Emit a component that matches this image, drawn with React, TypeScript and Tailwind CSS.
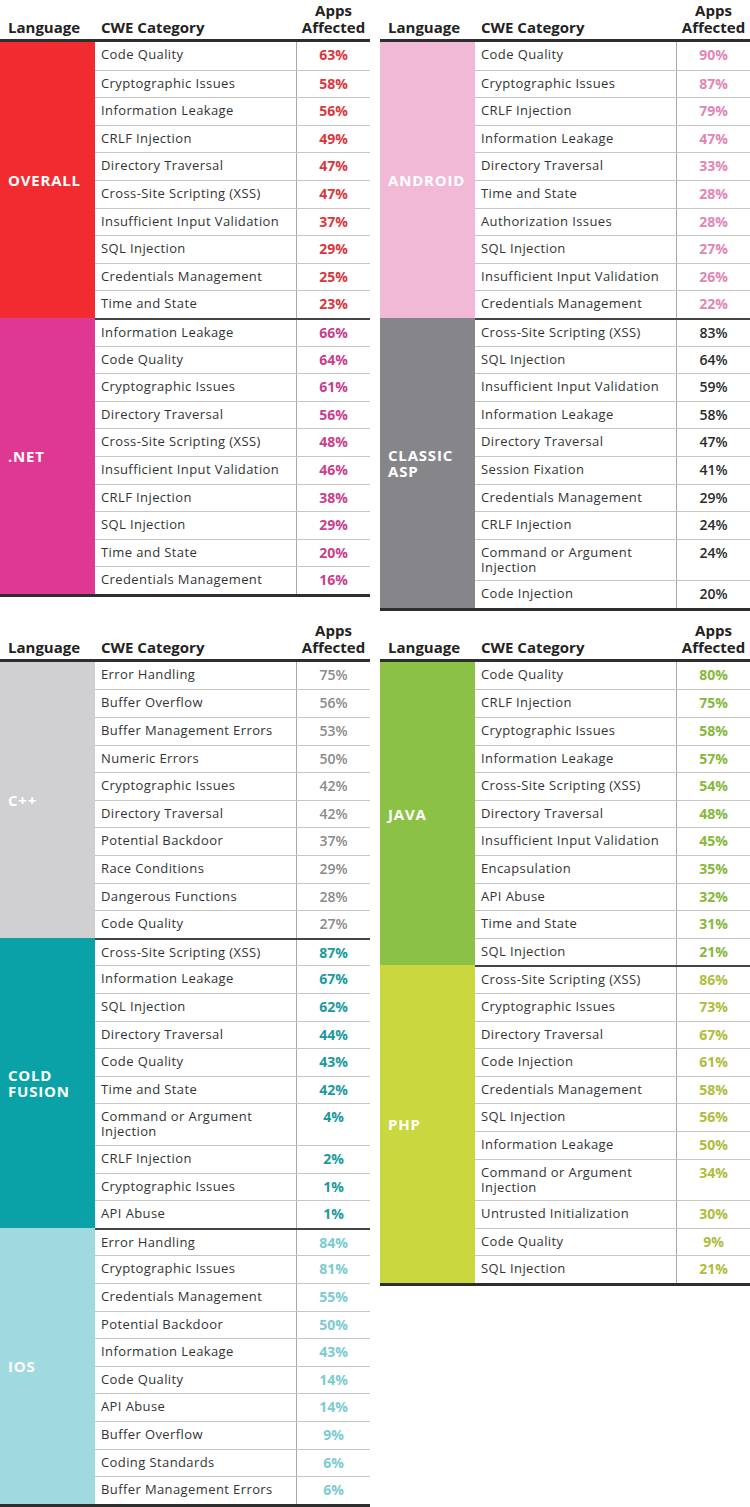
import React from "react";

type Row = { name: string; pct: string; tall?: boolean };
type Group = { label: string[]; bg: string; pct: string; weight: string; rows: Row[] };

const r = (name: string, pct: string, tall?: boolean): Row => ({ name, pct, tall });

const topLeft: Group[] = [
  {
    label: ["OVERALL"],
    bg: "bg-[#f22b30]",
    pct: "text-[#d8383d]",
    weight: "font-bold",
    rows: [
      r("Code Quality", "63%"),
      r("Cryptographic Issues", "58%"),
      r("Information Leakage", "56%"),
      r("CRLF Injection", "49%"),
      r("Directory Traversal", "47%"),
      r("Cross-Site Scripting (XSS)", "47%"),
      r("Insufficient Input Validation", "37%"),
      r("SQL Injection", "29%"),
      r("Credentials Management", "25%"),
      r("Time and State", "23%"),
    ],
  },
  {
    label: [".NET"],
    bg: "bg-[#df3893]",
    pct: "text-[#c7408f]",
    weight: "font-bold",
    rows: [
      r("Information Leakage", "66%"),
      r("Code Quality", "64%"),
      r("Cryptographic Issues", "61%"),
      r("Directory Traversal", "56%"),
      r("Cross-Site Scripting (XSS)", "48%"),
      r("Insufficient Input Validation", "46%"),
      r("CRLF Injection", "38%"),
      r("SQL Injection", "29%"),
      r("Time and State", "20%"),
      r("Credentials Management", "16%"),
    ],
  },
];

const topRight: Group[] = [
  {
    label: ["ANDROID"],
    bg: "bg-[#f1b9d5]",
    pct: "text-[#df86b6]",
    weight: "font-bold",
    rows: [
      r("Code Quality", "90%"),
      r("Cryptographic Issues", "87%"),
      r("CRLF Injection", "79%"),
      r("Information Leakage", "47%"),
      r("Directory Traversal", "33%"),
      r("Time and State", "28%"),
      r("Authorization Issues", "28%"),
      r("SQL Injection", "27%"),
      r("Insufficient Input Validation", "26%"),
      r("Credentials Management", "22%"),
    ],
  },
  {
    label: ["CLASSIC", "ASP"],
    bg: "bg-[#86868a]",
    pct: "text-[#2a2a2a]",
    weight: "font-semibold",
    rows: [
      r("Cross-Site Scripting (XSS)", "83%"),
      r("SQL Injection", "64%"),
      r("Insufficient Input Validation", "59%"),
      r("Information Leakage", "58%"),
      r("Directory Traversal", "47%"),
      r("Session Fixation", "41%"),
      r("Credentials Management", "29%"),
      r("CRLF Injection", "24%"),
      r("Command or Argument Injection", "24%", true),
      r("Code Injection", "20%"),
    ],
  },
];

const bottomLeft: Group[] = [
  {
    label: ["C++"],
    bg: "bg-[#d0d0d2]",
    pct: "text-[#8a8a8a]",
    weight: "font-semibold",
    rows: [
      r("Error Handling", "75%"),
      r("Buffer Overflow", "56%"),
      r("Buffer Management Errors", "53%"),
      r("Numeric Errors", "50%"),
      r("Cryptographic Issues", "42%"),
      r("Directory Traversal", "42%"),
      r("Potential Backdoor", "37%"),
      r("Race Conditions", "29%"),
      r("Dangerous Functions", "28%"),
      r("Code Quality", "27%"),
    ],
  },
  {
    label: ["COLD", "FUSION"],
    bg: "bg-[#0aa2a6]",
    pct: "text-[#1a9aa0]",
    weight: "font-bold",
    rows: [
      r("Cross-Site Scripting (XSS)", "87%"),
      r("Information Leakage", "67%"),
      r("SQL Injection", "62%"),
      r("Directory Traversal", "44%"),
      r("Code Quality", "43%"),
      r("Time and State", "42%"),
      r("Command or Argument Injection", "4%", true),
      r("CRLF Injection", "2%"),
      r("Cryptographic Issues", "1%"),
      r("API Abuse", "1%"),
    ],
  },
  {
    label: ["IOS"],
    bg: "bg-[#a0d9de]",
    pct: "text-[#7ccbd2]",
    weight: "font-bold",
    rows: [
      r("Error Handling", "84%"),
      r("Cryptographic Issues", "81%"),
      r("Credentials Management", "55%"),
      r("Potential Backdoor", "50%"),
      r("Information Leakage", "43%"),
      r("Code Quality", "14%"),
      r("API Abuse", "14%"),
      r("Buffer Overflow", "9%"),
      r("Coding Standards", "6%"),
      r("Buffer Management Errors", "6%"),
    ],
  },
];

const bottomRight: Group[] = [
  {
    label: ["JAVA"],
    bg: "bg-[#8bc144]",
    pct: "text-[#86b83c]",
    weight: "font-bold",
    rows: [
      r("Code Quality", "80%"),
      r("CRLF Injection", "75%"),
      r("Cryptographic Issues", "58%"),
      r("Information Leakage", "57%"),
      r("Cross-Site Scripting (XSS)", "54%"),
      r("Directory Traversal", "48%"),
      r("Insufficient Input Validation", "45%"),
      r("Encapsulation", "35%"),
      r("API Abuse", "32%"),
      r("Time and State", "31%"),
      r("SQL Injection", "21%"),
    ],
  },
  {
    label: ["PHP"],
    bg: "bg-[#cad73f]",
    pct: "text-[#b0bc3c]",
    weight: "font-bold",
    rows: [
      r("Cross-Site Scripting (XSS)", "86%"),
      r("Cryptographic Issues", "73%"),
      r("Directory Traversal", "67%"),
      r("Code Injection", "61%"),
      r("Credentials Management", "58%"),
      r("SQL Injection", "56%"),
      r("Information Leakage", "50%"),
      r("Command or Argument Injection", "34%", true),
      r("Untrusted Initialization", "30%"),
      r("Code Quality", "9%"),
      r("SQL Injection", "21%"),
    ],
  },
];

function Header() {
  return (
    <div className="grid h-[42px] grid-cols-[95px_202px_73px] border-b-[3px] border-[#2e2e2e] text-[15px] font-bold leading-[17px] text-[#222]">
      <div className="self-end pb-[3px] pl-[8px]">Language</div>
      <div className="self-end pb-[3px] pl-[6px]">CWE Category</div>
      <div className="self-end pb-[3px] text-center">
        Apps
        <br />
        Affected
      </div>
    </div>
  );
}

function GroupBlock({ g, first }: { g: Group; first: boolean }) {
  return (
    <div className="grid grid-cols-[95px_275px]">
      <div className={`${g.bg} flex flex-col justify-center pl-[8px] text-[15px] font-bold leading-[16px] tracking-[0.8px] text-white`}>
        {g.label.map((l) => (
          <div key={l}>{l}</div>
        ))}
      </div>
      <div className="flex flex-col">
        {g.rows.map((row, i) => (
          <div
            key={i}
            className={`grid grid-cols-[202px_73px] ${row.tall ? "h-[41.6px]" : "h-[27.6px]"} ${
              i === 0 ? (first ? "" : "border-t-2 border-[#444]") : "border-t border-[#c6c6c6]"
            }`}
          >
            <div className="border-r border-[#a8a8a8] pl-[6px] pt-[5px] text-[13px] leading-[15px] tracking-[0.4px] text-[#333]">
              {row.tall ? (
                <>
                  Command or Argument
                  <br />
                  Injection
                </>
              ) : (
                row.name
              )}
            </div>
            <div className={`pt-[5px] text-center text-[14px] leading-[15px] ${g.pct} ${g.weight}`}>{row.pct}</div>
          </div>
        ))}
      </div>
    </div>
  );
}

function Table({ groups }: { groups: Group[] }) {
  return (
    <div className="flex w-[370px] flex-col">
      <Header />
      <div className="flex flex-col border-b-[3px] border-[#2e2e2e]">
        {groups.map((g, i) => (
          <GroupBlock key={i} g={g} first={i === 0} />
        ))}
      </div>
    </div>
  );
}

export default function App() {
  return (
    <div className="w-[750px] bg-white font-['Open_Sans',sans-serif]">
      <div className="grid grid-cols-[370px_370px] items-start gap-x-[10px]">
        <Table groups={topLeft} />
        <Table groups={topRight} />
      </div>
      <div className="mt-[9px] grid grid-cols-[370px_370px] items-start gap-x-[10px]">
        <Table groups={bottomLeft} />
        <Table groups={bottomRight} />
      </div>
    </div>
  );
}
